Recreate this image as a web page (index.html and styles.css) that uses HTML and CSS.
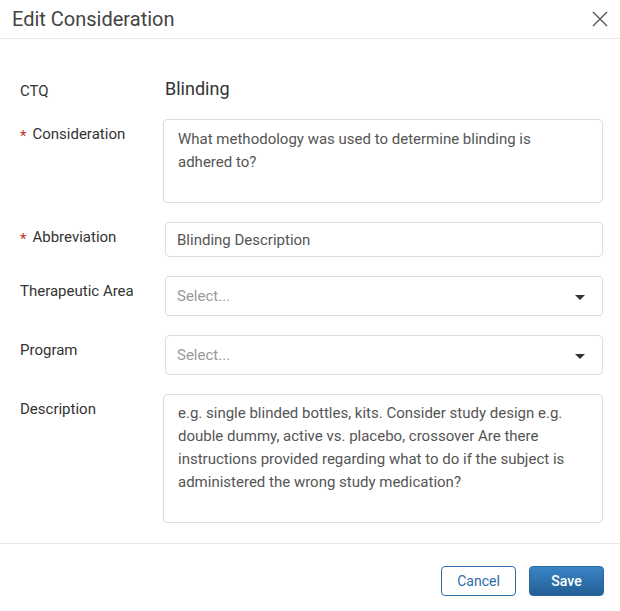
FILE: index.html
```html
<!DOCTYPE html>
<html>
<head>
<meta charset="utf-8">
<link rel="stylesheet" href="styles.css">
</head>
<body>
<div class="dialog">
  <div class="header">
    <div class="title">Edit Consideration</div>
    <button class="close" aria-label="Close">
      <svg width="16" height="16" viewBox="0 0 16 16"><path d="M1 1 L15 15 M15 1 L1 15" stroke="#555" stroke-width="1.4" fill="none"/></svg>
    </button>
  </div>
  <div class="body">
    <div class="label ctq">CTQ</div>
    <div class="value">Blinding</div>

    <div class="label"><span class="req">*</span>Consideration</div>
    <div class="field textarea small">What methodology was used to determine blinding is adhered to?</div>

    <div class="label"><span class="req">*</span>Abbreviation</div>
    <div class="field input">Blinding Description</div>

    <div class="label">Therapeutic Area</div>
    <div class="field input select"><span class="ph">Select...</span><span class="caret"></span></div>

    <div class="label">Program</div>
    <div class="field input select"><span class="ph">Select...</span><span class="caret"></span></div>

    <div class="label">Description</div>
    <div class="field textarea large">e.g. single blinded bottles, kits. Consider study design e.g. double dummy, active vs. placebo, crossover Are there instructions provided regarding what to do if the subject is administered the wrong study medication?</div>
  </div>
  <div class="footer">
    <button class="btn cancel">Cancel</button>
    <button class="btn save">Save</button>
  </div>
</div>
</body>
</html>
```
FILE: styles.css
```css
* { box-sizing: border-box; }
html, body { margin: 0; padding: 0; background: #fff; }
body { font-family: Roboto, "Liberation Sans", sans-serif; color: #333; }
.dialog { width: 620px; height: 611px; display: flex; flex-direction: column; }
.header {
  height: 39px;
  border-bottom: 1px solid #e6e6e6;
  display: flex; align-items: center; justify-content: space-between;
  padding: 0 12px 0 12px;
}
.title { font-size: 20px; color: #444; line-height: 24px; margin-top: -1px; }
.close { background: none; border: 0; padding: 0; width: 16px; height: 16px; display: flex; margin-top: -1px; margin-right: 0; }
.body {
  display: grid;
  grid-template-columns: 143px 440px;
  column-gap: 0;
  row-gap: 19px;
  padding: 39px 17px 20px 20px;
  align-items: start;
}
.label { font-size: 15px; line-height: 20px; padding-top: 5px; color: #333; display: flex; align-items: center; }
.label.ctq { padding-top: 5px; line-height: 17px; }
.req { color: #c9302c; font-size: 15px; margin-right: 6px; position: relative; top: 2px; }
.value { font-size: 18px; line-height: 22px; color: #333; padding-left: 2px; }
.field { border: 1px solid #dcdcdc; border-radius: 4px; color: #555; font-size: 15px; }
.textarea { padding: 8px 14px; line-height: 23px; }
.textarea.small { height: 84px; }
.textarea.large { height: 129px; padding-top: 7px; }
.input { margin-left: 2px; height: 35px; padding: 0 11px; display: flex; align-items: center; }
.select { height: 40px; justify-content: space-between; }
.ph { color: #999; }
.caret {
  width: 0; height: 0;
  border-left: 5px solid transparent; border-right: 5px solid transparent;
  border-top: 5px solid #333;
  margin-right: 6px; margin-top: 2px;
}
.footer {
  border-top: 1px solid #e6e6e6;
  padding: 22px 16px 0 0;
  display: flex; justify-content: flex-end; gap: 13px;
}
.btn {
  font-family: Roboto, "Liberation Sans", sans-serif;
  font-size: 14px; width: 75px; height: 30px; border-radius: 4px; padding: 0; cursor: pointer;
}
.cancel { background: #fff; border: 1px solid #2d6ca8; color: #2d6ca8; }
.save { background: linear-gradient(#3a85c6, #235d95); border: 1px solid #2a67a0; color: #fff; font-weight: 500; }
```
